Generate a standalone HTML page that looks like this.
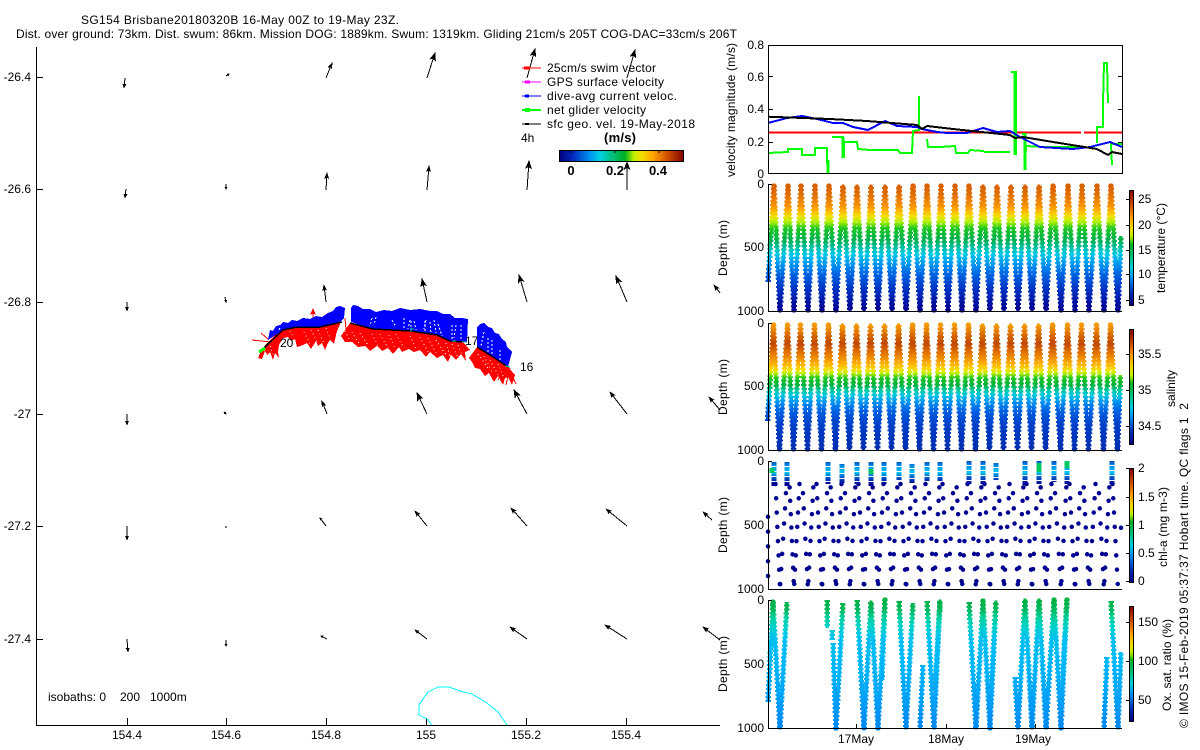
<!DOCTYPE html>
<html><head><meta charset="utf-8"><title>SG154 Brisbane20180320B</title>
<style>
html,body{margin:0;padding:0;background:#fff;width:1200px;height:750px;overflow:hidden}
svg{display:block}
text{font-family:"Liberation Sans",sans-serif;font-size:12px;fill:#000}
.e{text-anchor:end}.m{text-anchor:middle}
.b{font-weight:bold;font-size:13px}
</style></head><body>
<svg width="1200" height="750" viewBox="0 0 1200 750" xmlns="http://www.w3.org/2000/svg" shape-rendering="crispEdges">
<defs>
<marker id="l" markerUnits="userSpaceOnUse" markerWidth="11" markerHeight="9" refX="8" refY="4" orient="auto"><path d="M0 0.5L9 4L0 7.5L2 4Z" fill="#000"/></marker>
<marker id="a" markerUnits="userSpaceOnUse" markerWidth="9" markerHeight="7" refX="6" refY="3" orient="auto"><path d="M0 0.5L7 3L0 5.5L1.5 3Z" fill="#000"/></marker>
<marker id="m" markerUnits="userSpaceOnUse" markerWidth="6" markerHeight="6" refX="4" refY="2.5" orient="auto"><path d="M0 0.5L4.5 2.5L0 4.5Z" fill="#000"/></marker>
<marker id="s" markerUnits="userSpaceOnUse" markerWidth="4" markerHeight="4" refX="2" refY="1.5" orient="auto"><path d="M0 0L3 1.5L0 3Z" fill="#000"/></marker>
<marker id="r" markerUnits="userSpaceOnUse" markerWidth="9" markerHeight="7" refX="6" refY="3" orient="auto"><path d="M0 0L7 3L0 6L1.5 3Z" fill="#f00"/></marker>
<linearGradient id="cb" x1="0" y1="1" x2="0" y2="0"><stop offset="0" stop-color="#000080"/><stop offset=".12" stop-color="#0030c0"/><stop offset=".24" stop-color="#0090f0"/><stop offset=".33" stop-color="#00d0e0"/><stop offset=".42" stop-color="#00c080"/><stop offset=".53" stop-color="#00b020"/><stop offset=".6" stop-color="#c0f000"/><stop offset=".66" stop-color="#f0e000"/><stop offset=".75" stop-color="#ffa800"/><stop offset=".87" stop-color="#d05000"/><stop offset="1" stop-color="#800000"/></linearGradient>
<linearGradient id="cbh" x1="0" y1="0" x2="1" y2="0"><stop offset="0" stop-color="#000080"/><stop offset=".12" stop-color="#0030c0"/><stop offset=".24" stop-color="#0090f0"/><stop offset=".33" stop-color="#00d0e0"/><stop offset=".42" stop-color="#00c080"/><stop offset=".53" stop-color="#00b020"/><stop offset=".6" stop-color="#c0f000"/><stop offset=".66" stop-color="#f0e000"/><stop offset=".75" stop-color="#ffa800"/><stop offset=".87" stop-color="#d05000"/><stop offset="1" stop-color="#800000"/></linearGradient>
<linearGradient id="tg" gradientUnits="userSpaceOnUse" x1="0" y1="186" x2="0" y2="310"><stop offset="0" stop-color="#d96000"/><stop offset=".07" stop-color="#e07000"/><stop offset=".155" stop-color="#f59000"/><stop offset=".195" stop-color="#ffb000"/><stop offset=".245" stop-color="#f0e000"/><stop offset=".29" stop-color="#b0f000"/><stop offset=".34" stop-color="#20c820"/><stop offset=".435" stop-color="#00b050"/><stop offset=".5" stop-color="#00c0a8"/><stop offset=".55" stop-color="#00c8e8"/><stop offset=".64" stop-color="#0090f0"/><stop offset=".72" stop-color="#0060e0"/><stop offset=".84" stop-color="#0030c0"/><stop offset="1" stop-color="#000090"/></linearGradient>
<linearGradient id="sg2" gradientUnits="userSpaceOnUse" x1="0" y1="186" x2="0" y2="309"><stop offset="0" stop-color="#f59a00"/><stop offset=".08" stop-color="#d96a00"/><stop offset=".15" stop-color="#c04800"/><stop offset=".22" stop-color="#e07000"/><stop offset=".27" stop-color="#f09000"/><stop offset=".325" stop-color="#ffb800"/><stop offset=".366" stop-color="#f0e000"/><stop offset=".39" stop-color="#c8f000"/><stop offset=".43" stop-color="#20c820"/><stop offset=".49" stop-color="#00b040"/><stop offset=".53" stop-color="#00c8a0"/><stop offset=".57" stop-color="#00c8e0"/><stop offset=".63" stop-color="#0090f0"/><stop offset=".7" stop-color="#0060e0"/><stop offset=".81" stop-color="#0040c8"/><stop offset="1" stop-color="#0030b0"/></linearGradient>
<linearGradient id="og" gradientUnits="userSpaceOnUse" x1="0" y1="600" x2="0" y2="728"><stop offset="0" stop-color="#00b040"/><stop offset=".08" stop-color="#00b860"/><stop offset=".14" stop-color="#00d0a0"/><stop offset=".22" stop-color="#00d0d0"/><stop offset=".3" stop-color="#00c0f0"/><stop offset=".55" stop-color="#00b4f8"/><stop offset=".78" stop-color="#00a0f8"/><stop offset="1" stop-color="#0088f0"/></linearGradient>
<linearGradient id="cg" gradientUnits="userSpaceOnUse" x1="0" y1="461" x2="0" y2="484"><stop offset="0" stop-color="#0050c0"/><stop offset=".3" stop-color="#00a0f0"/><stop offset=".5" stop-color="#00c8f0"/><stop offset=".68" stop-color="#0060d0"/><stop offset="1" stop-color="#000090"/></linearGradient>
<path id="zz" d="M768 282L774 186L780 310L788 186L794 310L801 186L808 310L815 186L822 310L829 186L836 310L843 186L850 310L857 186L864 310L871 186L878 310L885 186L892 310L899 186L906 310L913 186L920 310L927 186L934 310L941 186L948 310L955 186L962 310L969 186L976 310L983 186L990 310L997 186L1004 310L1011 186L1018 310L1025 186L1032 310L1039 186L1046 310L1053 186L1061 310L1068 186L1075 310L1082 186L1089 310L1097 186L1104 310L1111 186L1118 310L1121 236"/>
<path id="oo" d="M768 702L773 602L780 728L787 602M827 600V628M832 630V640M833 643L836 728L843 603M857 600L864 728L871 602L878 728L885 600L882 680M899 601L906 728L913 603M923 665L920 728M927 601L934 728L940 601L935 690M969 602L976 728L983 601L990 728L996 602L991 690M1015 677L1018 728L1025 600L1032 728L1039 600L1046 728L1054 600L1061 728L1067 600L1062 683M1107 657L1104 728M1111 601L1118 728L1121 652"/>
</defs>

<!-- title -->
<text x="81" y="24" textLength="318" lengthAdjust="spacing">SG154 Brisbane20180320B 16-May 00Z to 19-May 23Z.</text>
<text x="16" y="38" textLength="721" lengthAdjust="spacing">Dist. over ground: 73km. Dist. swum: 86km. Mission DOG: 1889km. Swum: 1319km. Gliding 21cm/s 205T COG-DAC=33cm/s 206T</text>

<!-- map axes -->
<path d="M36.5 47V725.5H720M36 77.5H43M36 189.5H43M36 302.5H43M36 414.5H43M36 526.5H43M36 639.5H43M127.5 718V725M226.5 718V725M326.5 718V725M426.5 718V725M526.5 718V725M626.5 718V725" stroke="#000" fill="none"/>
<text x="31" y="81" class="e">-26.4</text><text x="31" y="193" class="e">-26.6</text><text x="31" y="306" class="e">-26.8</text><text x="31" y="418" class="e">-27</text><text x="31" y="530" class="e">-27.2</text><text x="31" y="643" class="e">-27.4</text>
<text x="127" y="739" class="m">154.4</text><text x="226" y="739" class="m">154.6</text><text x="326" y="739" class="m">154.8</text><text x="426" y="739" class="m">155</text><text x="526" y="739" class="m">155.2</text><text x="626" y="739" class="m">155.4</text>
<text x="48" y="701">isobaths: 0</text><text x="120" y="701">200</text><text x="150" y="701">1000m</text>
<path d="M432 725L427 719L419 715V705L423 699L428 692L438 687H449L460 691L472 694L487 703L498 712L507 725" fill="none" stroke="#0ff"/>

<!-- current arrows -->
<g fill="none" stroke="#000">
<path marker-end="url(#m)" d="M125 78L124 88"/><path marker-end="url(#s)" d="M226 76L229 74"/><path marker-end="url(#a)" d="M326 78L332 63"/><path marker-end="url(#l)" d="M427 78L435 53"/><path marker-end="url(#l)" d="M527 78L535 49"/><path marker-end="url(#l)" d="M627 78L635 50"/>
<path marker-end="url(#m)" d="M126 189L125 198"/><path marker-end="url(#s)" d="M226 184L226 189"/><path marker-end="url(#a)" d="M326 190L327 173"/><path marker-end="url(#a)" d="M427 190L429 166"/><path marker-end="url(#l)" d="M527 190L529 161"/><path marker-end="url(#l)" d="M627 190V162"/>
<path marker-end="url(#m)" d="M127 302V311"/><path marker-end="url(#s)" d="M225 297L226 302"/><path marker-end="url(#a)" d="M326 302L324 285"/><path marker-end="url(#l)" d="M427 302L422 279"/><path marker-end="url(#l)" d="M527 302L519 275"/><path marker-end="url(#l)" d="M627 302L616 276"/><path marker-end="url(#a)" d="M720 293L714 285"/>
<path marker-end="url(#m)" d="M127 414V425"/><path marker-end="url(#s)" d="M224 412L226 414"/><path marker-end="url(#a)" d="M327 414L322 401"/><path marker-end="url(#l)" d="M427 414L417 393"/><path marker-end="url(#l)" d="M527 414L514 390"/><path marker-end="url(#a)" d="M627 414L610 392"/><path marker-end="url(#a)" d="M720 410L709 397"/>
<path marker-end="url(#m)" d="M127 526V540"/><path d="M225 527H227"/><path marker-end="url(#s)" d="M326 526L320 518"/><path marker-end="url(#a)" d="M427 526L415 511"/><path marker-end="url(#a)" d="M527 526L511 508"/><path marker-end="url(#a)" d="M627 526L606 509"/><path marker-end="url(#a)" d="M712 520L703 512"/>
<path marker-end="url(#m)" d="M127 639L128 652"/><path marker-end="url(#s)" d="M226 640V646"/><path marker-end="url(#s)" d="M327 639L321 636"/><path marker-end="url(#m)" d="M427 639L415 630"/><path marker-end="url(#a)" d="M527 639L510 627"/><path marker-end="url(#a)" d="M627 639L605 625"/><path marker-end="url(#a)" d="M720 640L703 627"/>
</g>

<!-- glider track -->
<path fill="#f00" d="M258 358L262 349L268 342L276 334L286 329L300 327L322 326L341 322L337 331L334 344L330 340L328 343L325 350L322 343L318 346L316 341L311 349L307 343L303 345L297 347L295 339L291 341L288 337L283 338L279 345L278 352L279 358L275 353L273 360L270 352L267 355L265 351L262 359Z"/>
<path fill="#f00" d="M341 336L350 323L373 329L410 331L437 335L450 341L463 342L470 350L465 352L466 361L461 354L456 360L451 355L448 362L443 355L437 358L430 352L426 357L420 350L414 352L409 349L402 352L399 347L393 354L388 348L382 351L377 346L370 351L365 346L358 347L352 342L345 342Z"/>
<path fill="#f00" d="M477 347L493 357L508 367L515 375L512 385L508 377L505 378L503 385L498 376L494 382L489 373L485 376L480 369L475 368L472 362L469 358Z"/>
<g fill="none" stroke="#f00"><path marker-end="url(#r)" d="M313 327V309"/><path d="M270 342L252 340M268 339L261 333M345 318L346 330M508 367L516 384M510 368L506 385M505 366L498 380"/></g>
<path fill="none" stroke="#fff" stroke-dasharray="1 3" d="M345 331L352 345M352 332L360 345M360 333L368 345M372 334L378 346M380 334L388 348M389 335L395 348M396 334L404 348M410 336L416 349M420 337L428 352M428 338L436 353M436 340L446 355M446 343L450 356M452 344L458 358M458 345L462 355M478 354L488 368M484 356L492 372M490 360L498 375M498 364L504 378M290 331L294 338M304 332L310 344M311 330L317 342M318 330L324 344M326 328L330 338M270 346L274 356M264 350L267 354"/>
<path fill="#00f" d="M268 340L270 330L273 331L276 326L280 325L283 322L288 323L292 320L297 321L303 318L310 319L316 316L322 317L328 313L333 311L336 307L340 306L345 308L344 318L340 322L320 327L297 327L283 330Z"/>
<path fill="#00f" d="M351 322V308L353 305L358 306L363 309L370 309L376 312L384 310L392 311L400 308L410 310L420 309L430 311L437 311L443 314L450 314L455 318L462 318L468 319L467 342L450 341L437 335L410 331L373 329Z"/>
<path fill="#00f" d="M477 347V327L480 324L484 323L488 327L492 328L495 333L499 334L502 339L506 342L507 347L512 352L508 367L493 357Z"/>
<path fill="none" stroke="#fff" stroke-dasharray="2 2" d="M280 328L278 331M372 318L370 326M376 317L374 325M392 320L396 327M404 318V329M410 320L408 329M414 321L416 330M426 320L424 329M411 321V330M425 321V332M430 322L431 334M434 320L436 333M438 324L442 336M452 325V340M456 325L454 338M461 325V340M484 332L481 346M488 338V352M492 340V355M500 350V362"/>
<path fill="none" stroke="#000" stroke-width="1.5" d="M260 352L270 342L283 330L297 327L320 327L342 322M350 323L373 329L410 331L437 335L450 341L463 342M477 347L493 357L508 367"/>
<path fill="none" stroke="#0f0" stroke-width="3" d="M259 352L265 348"/>
<path fill="none" stroke="#0c8" d="M410 329H414M411 328V332M452 341H456M505 366L510 367M462 342H467"/>
<text x="280" y="347">20</text><text x="465" y="345">17</text><text x="520" y="371">16</text>

<!-- legend -->
<g fill="none">
<path d="M522 68H541" stroke="#f00"/><path d="M524 68H530" stroke="#f00" stroke-width="3"/>
<path d="M522 82H541" stroke="#f0f"/><path d="M525 82H530" stroke="#f0f" stroke-width="3"/>
<path d="M522 96H541" stroke="#00f"/><path d="M525 96H529" stroke="#00f" stroke-width="3"/>
<path d="M522 110H541" stroke="#0f0" stroke-width="2"/><path d="M525 110H530" stroke="#0f0" stroke-width="4"/>
<path d="M522 124H541" stroke="#000"/><path d="M525 124H529" stroke="#000" stroke-width="2"/>
</g>
<text x="547" y="72" textLength="109">25cm/s swim vector</text>
<text x="547" y="86" textLength="117">GPS surface velocity</text>
<text x="547" y="100" textLength="130">dive-avg current veloc.</text>
<text x="547" y="114" textLength="99">net glider velocity</text>
<text x="547" y="128" textLength="148">sfc geo. vel. 19-May-2018</text>
<text x="521" y="142">4h</text>
<text x="604" y="142" class="b" textLength="32">(m/s)</text>
<rect x="559.5" y="150.5" width="124" height="11" fill="url(#cbh)" stroke="#000"/>
<path d="M571 150V153M615 150V153M659 150V153" stroke="#000"/>
<text x="571" y="175" class="b m">0</text><text x="615" y="175" class="b m">0.2</text><text x="658" y="175" class="b m">0.4</text>

<!-- velocity panel -->
<path d="M769 132.7H1081M1084 132.7H1122" stroke="#f00" stroke-width="2" fill="none"/>
<path fill="none" stroke="#0f0" stroke-width="2" d="M768 153L788 152V149H802V155H815V148H827V160L828 173M832 137H843L844 158V142L857 142L858 149L870 150H898L900 153H912L913 131L919 130V96V113M927 139L928 147H940L955 146L956 153H968L970 150L983 151L985 152H1010M1011 72H1016V155M1022 134H1025V170L1026 146L1043 147H1080M1097 143V127H1103V103L1104 63H1107L1108 103M1112 165L1111 144H1122"/>
<path fill="none" stroke="#0f0" stroke-width="3" d="M1015 72V155M828 160V173M843 137V158M1025 134V170"/>
<path fill="none" stroke="#00f" stroke-width="2" d="M768 123L787 118L802 116L817 119L833 123L843 123L853 127L868 130L885 121L897 126L917 127L922 129L937 132L947 133L967 133L983 128L997 132L1010 131L1020 137L1040 147L1073 149L1090 147L1110 142L1122 147"/>
<path fill="none" stroke="#000" stroke-width="2" d="M768 116.7L803 118L830 119L867 121L917 125L922 129L927 126L953 129L1010 135L1015 138L1023 137L1053 142L1097 149L1108 155L1112 152L1122 154"/>
<rect x="768.5" y="45.5" width="354" height="128" fill="none" stroke="#000"/>
<path d="M769 76.5H773M769 109.5H773M769 142.5H773M1118 76.5H1122M1118 109.5H1122M1118 142.5H1122" stroke="#000"/>
<text x="764" y="49" class="e">0.8</text><text x="764" y="81" class="e">0.6</text><text x="764" y="113" class="e">0.4</text><text x="764" y="146" class="e">0.2</text><text x="764" y="178" class="e">0</text>
<text transform="translate(735 177) rotate(-90)" textLength="134">velocity magnitude (m/s)</text>

<!-- temperature panel -->
<g fill="none" stroke="url(#tg)" stroke-linejoin="round"><use href="#zz" stroke-width="3.5"/><use href="#zz" stroke-width="5.5" stroke-dasharray="2 2"/></g>
<path d="M768.5 184V311.5H1122M768.5 184.5H772" stroke="#000" fill="none"/>
<text x="764" y="188" class="e">0</text><text x="764" y="251" class="e">500</text><text x="764" y="315" class="e">1000</text>
<text transform="translate(727 276) rotate(-90)" textLength="56">Depth (m)</text>
<rect x="1129.5" y="190.5" width="4" height="115" fill="url(#cb)" stroke="#000"/>
<path d="M1126 199.5H1129M1126 225.5H1129M1126 250.5H1129M1126 274.5H1129M1126 300.5H1129" stroke="#000"/>
<text x="1138" y="203">25</text><text x="1138" y="229">20</text><text x="1138" y="254">15</text><text x="1138" y="278">10</text><text x="1138" y="304">5</text>
<text transform="translate(1165 293) rotate(-90)" textLength="90">temperature (°C)</text>

<!-- salinity panel -->
<g transform="translate(-0.5 139)" fill="none" stroke="url(#sg2)" stroke-linejoin="round"><use href="#zz" stroke-width="3.5"/><use href="#zz" stroke-width="5.5" stroke-dasharray="2 2"/></g>
<path d="M768.5 323V450.5H1122M768.5 323.5H772" stroke="#000" fill="none"/>
<text x="764" y="327" class="e">0</text><text x="764" y="390" class="e">500</text><text x="764" y="454" class="e">1000</text>
<text transform="translate(727 415) rotate(-90)" textLength="56">Depth (m)</text>
<rect x="1129.5" y="329.5" width="4" height="115" fill="url(#cb)" stroke="#000"/>
<path d="M1126 354.5H1129M1126 390.5H1129M1126 426.5H1129" stroke="#000"/>
<text x="1138" y="358">35.5</text><text x="1138" y="394">35</text><text x="1138" y="430">34.5</text>
<text transform="translate(1175 407) rotate(-90)" textLength="37">salinity</text>

<!-- chl panel -->
<g fill="none" stroke="#000090" stroke-width="4.5" stroke-linecap="round" shape-rendering="auto">
<path stroke-dasharray="0 14.3" d="M775.5 484L780 589M799.5 484L794 589M816.5 484L822 589M841.5 484L836 589M858.5 484L864 589M883.5 484L878 589M900.5 484L906 589M925.5 484L920 589M942.5 484L948 589M967.5 484L962 589M984.5 484L990 589M1009.5 484L1004 589M1026.5 484L1032 589M1051.5 484L1046 589M1069.5 484L1075 589M1095.5 484L1089 589M1112.5 484L1118 589"/>
<path stroke-dasharray="0 15.2" stroke-dashoffset="6" d="M786.5 484L780 589M802.5 484L808 589M827.5 484L822 589M844.5 484L850 589M869.5 484L864 589M886.5 484L892 589M911.5 484L906 589M928.5 484L934 589M953.5 484L948 589M970.5 484L976 589M995.5 484L990 589M1012.5 484L1018 589M1037.5 484L1032 589M1054.5 484L1061 589M1080.5 484L1075 589M1098.5 484L1104 589"/>
<path stroke-dasharray="0 13.4" stroke-dashoffset="10" d="M789.5 484L794 589M813.5 484L808 589M830.5 484L836 589M855.5 484L850 589M872.5 484L878 589M897.5 484L892 589M914.5 484L920 589M939.5 484L934 589M956.5 484L962 589M981.5 484L976 589M998.5 484L1004 589M1023.5 484L1018 589M1040.5 484L1046 589M1066.5 484L1061 589M1083.5 484L1089 589M1109.5 484L1104 589"/>
<path stroke-dasharray="0 14.8" stroke-dashoffset="3" d="M768 505V580M1121 516V536"/>
</g>
<path fill="none" stroke="url(#cg)" stroke-width="5" stroke-dasharray="4 1" d="M774 462V486M787 462V486M828 462V484M842 464V484M857 462V484M871 462V486M884 462V484M899 462V480M912 464V484M927 462V482M940 462V482M969 461V484M983 461V484M996 463V480M1025 461V486M1039 461V484M1054 461V482M1067 461V484M1112 461V484"/>
<path fill="none" stroke="#00c860" stroke-width="5" d="M772 468V473M871 469V474M1039 463V472M1067 461V468"/>
<path d="M768.5 461V589.5H1122M768.5 461.5H772" stroke="#000" fill="none"/>
<text x="764" y="465" class="e">0</text><text x="764" y="529" class="e">500</text><text x="764" y="593" class="e">1000</text>
<text transform="translate(727 553) rotate(-90)" textLength="56">Depth (m)</text>
<rect x="1129.5" y="468.5" width="4" height="114" fill="url(#cb)" stroke="#000"/>
<path d="M1126 468.5H1129M1126 497.5H1129M1126 525.5H1129M1126 553.5H1129M1126 581.5H1129" stroke="#000"/>
<text x="1138" y="472">2</text><text x="1138" y="501">1.5</text><text x="1138" y="529">1</text><text x="1138" y="557">0.5</text><text x="1138" y="585">0</text>
<text transform="translate(1167 567) rotate(-90)" textLength="80">chl-a (mg m-3)</text>

<!-- oxygen panel -->
<g fill="none" stroke="url(#og)" stroke-linejoin="round"><use href="#oo" stroke-width="3.5"/><use href="#oo" stroke-width="5.5" stroke-dasharray="2 2"/></g>
<path d="M768.5 600V728.5H1122M768.5 600.5H772M856.5 724V728M946.5 724V728M1035.5 724V728" stroke="#000" fill="none"/>
<text x="764" y="604" class="e">0</text><text x="764" y="668" class="e">500</text><text x="764" y="732" class="e">1000</text>
<text transform="translate(727 692) rotate(-90)" textLength="56">Depth (m)</text>
<text x="856" y="743" class="m">17May</text><text x="946" y="743" class="m">18May</text><text x="1033" y="743" class="m">19May</text>
<rect x="1129.5" y="606.5" width="4" height="115" fill="url(#cb)" stroke="#000"/>
<path d="M1126 622.5H1129M1126 661.5H1129M1126 700.5H1129" stroke="#000"/>
<text x="1138" y="626">150</text><text x="1138" y="665">100</text><text x="1138" y="704">50</text>
<text transform="translate(1171 711) rotate(-90)" textLength="92">Ox. sat. ratio (%)</text>

<text transform="translate(1188 728) rotate(-90)" textLength="325">© IMOS 15-Feb-2019 05:37:37 Hobart time. QC flags 1&#160;&#160;2</text>
</svg>
</body></html>
